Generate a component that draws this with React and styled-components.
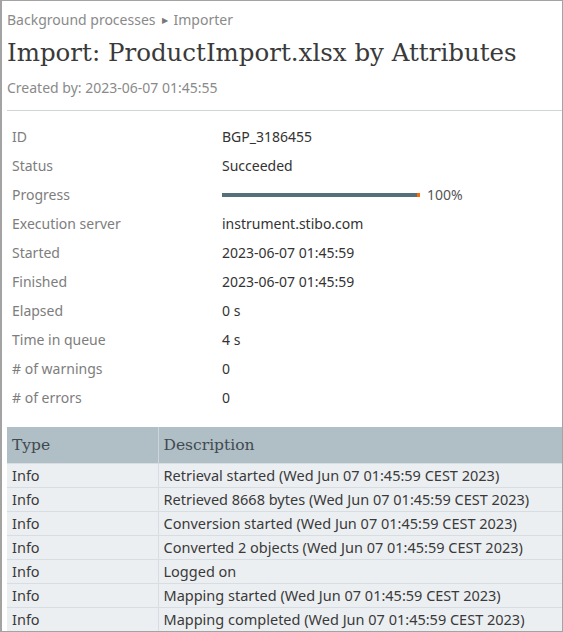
import React from "react";
import styled, { createGlobalStyle } from "styled-components";

const Global = createGlobalStyle`
  html, body { margin: 0; padding: 0; background: #fff; }
  body { font-family: "Noto Sans", "Open Sans", sans-serif; }
  * { box-sizing: border-box; }
`;

const Frame = styled.div`
  width: 563px;
  height: 632px;
  border: 1px solid #a3a3a3;
  border-left: 2px solid #a3a3a3;
  overflow: hidden;
  padding-left: 5px;
`;

const Header = styled.header`
  padding-top: 9px;
  border-bottom: 1px solid #cfd4d7;
  padding-bottom: 12px;
`;

const Breadcrumb = styled.nav`
  display: flex;
  align-items: center;
  gap: 6px;
  font-size: 14px;
  line-height: 20px;
  color: #8a8a8a;
`;

const Sep = styled.span`
  font-size: 8px;
  color: #777;
`;

const Title = styled.h1`
  margin: 8px 0 0;
  font-family: "DejaVu Serif", serif;
  font-weight: normal;
  font-size: 24.5px;
  line-height: 30px;
  color: #3a3a3a;
`;

const Meta = styled.div`
  margin-top: 10px;
  font-size: 14px;
  line-height: 20px;
  color: #8a8a8a;
`;

const Props = styled.dl`
  display: grid;
  grid-template-columns: 210px 1fr;
  grid-auto-rows: 29px;
  align-items: center;
  margin: 11px 0 0;
  padding-left: 5px;
  font-size: 14px;
`;

const Label = styled.dt`
  color: #7d7d7d;
`;

const Value = styled.dd`
  margin: 0;
  color: #333;
  display: flex;
  align-items: center;
`;

const Bar = styled.div`
  width: 198px;
  height: 4px;
  background: #56707a;
  position: relative;
  margin-right: 7px;
`;

const BarEnd = styled.span`
  position: absolute;
  right: 0;
  top: 0;
  width: 3px;
  height: 4px;
  background: #ff6a00;
`;

const Pct = styled.span`
  color: #555;
`;

const Log = styled.table`
  margin-top: 15px;
  width: 100%;
  border-collapse: collapse;
  font-size: 14.5px;
`;

const Th = styled.th`
  background: #b0bec5;
  font-family: "DejaVu Serif", serif;
  font-weight: normal;
  font-size: 15.5px;
  color: #3f4a50;
  text-align: left;
  height: 36px;
  padding: 0 5px;
  border-left: 1px solid #cbd5da;
  &:first-child { border-left: none; width: 151px; }
`;

const Td = styled.td`
  background: #eceff1;
  color: #3a3a3a;
  height: 24px;
  padding: 0 5px;
  border-top: 1px solid #d7dde0;
  border-left: 1px solid #d7dde0;
  &:first-child { border-left: none; }
`;

const props = [
  ["ID", "BGP_3186455"],
  ["Status", "Succeeded"],
  ["Progress", null],
  ["Execution server", "instrument.stibo.com"],
  ["Started", "2023-06-07 01:45:59"],
  ["Finished", "2023-06-07 01:45:59"],
  ["Elapsed", "0 s"],
  ["Time in queue", "4 s"],
  ["# of warnings", "0"],
  ["# of errors", "0"],
];

const logs = [
  "Retrieval started (Wed Jun 07 01:45:59 CEST 2023)",
  "Retrieved 8668 bytes (Wed Jun 07 01:45:59 CEST 2023)",
  "Conversion started (Wed Jun 07 01:45:59 CEST 2023)",
  "Converted 2 objects (Wed Jun 07 01:45:59 CEST 2023)",
  "Logged on",
  "Mapping started (Wed Jun 07 01:45:59 CEST 2023)",
  "Mapping completed (Wed Jun 07 01:45:59 CEST 2023)",
];

export default function App() {
  return (
    <>
      <Global />
      <Frame>
        <Header>
          <Breadcrumb>
            <span>Background processes</span>
            <Sep>▶</Sep>
            <span>Importer</span>
          </Breadcrumb>
          <Title>Import: ProductImport.xlsx by Attributes</Title>
          <Meta>Created by: 2023-06-07 01:45:55</Meta>
        </Header>
        <Props>
          {props.map(([k, v]) => (
            <React.Fragment key={k}>
              <Label>{k}</Label>
              <Value>
                {v === null ? (
                  <>
                    <Bar>
                      <BarEnd />
                    </Bar>
                    <Pct>100%</Pct>
                  </>
                ) : (
                  v
                )}
              </Value>
            </React.Fragment>
          ))}
        </Props>
        <Log>
          <thead>
            <tr>
              <Th>Type</Th>
              <Th>Description</Th>
            </tr>
          </thead>
          <tbody>
            {logs.map((d) => (
              <tr key={d}>
                <Td>Info</Td>
                <Td>{d}</Td>
              </tr>
            ))}
          </tbody>
        </Log>
      </Frame>
    </>
  );
}
